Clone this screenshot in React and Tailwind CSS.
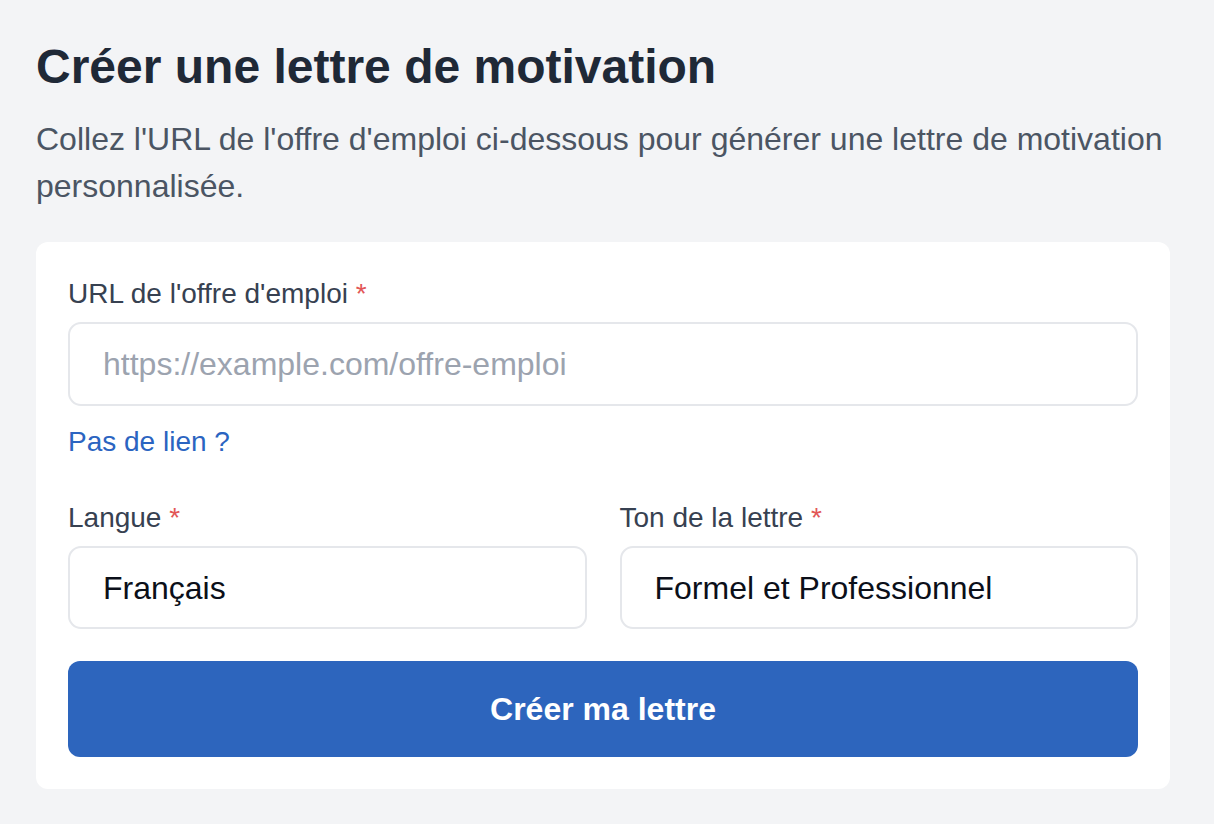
import React from "react";

export default function App() {
  return (
    <div
      className="min-h-[824px] w-full bg-[#f3f4f6] pl-[36px] pr-[44px] pt-[35px] pb-[32px]"
      style={{ fontFamily: '"Liberation Sans", Arial, Helvetica, sans-serif' }}
    >
      <h1 className="text-[48px] leading-[64px] font-bold text-[#1f2937]">
        Créer une lettre de motivation
      </h1>
      <p className="mt-[17px] text-[32px] leading-[47px] text-[#4b5563]">
        Collez l'URL de l'offre d'emploi ci-dessous pour générer une lettre de motivation personnalisée.
      </p>

      <div className="mt-[32px] rounded-[12px] bg-white p-[32px]">
        <label className="block text-[28px] leading-[40px] text-[#374151]">
          URL de l'offre d'emploi <span className="text-[#e25656]">*</span>
        </label>
        <div className="mt-[8px] flex h-[84px] items-center rounded-[13px] border-2 border-[#e5e7eb] bg-white px-[33px]">
          <span className="text-[32px] text-[#9ca3af]">https://example.com/offre-emploi</span>
        </div>
        <div className="mt-[16px] text-[28px] leading-[40px] text-[#2b64c1]">Pas de lien ?</div>

        <div className="mt-[36px] grid grid-cols-2 gap-[33px]">
          <div>
            <label className="block text-[28px] leading-[40px] text-[#374151]">
              Langue <span className="text-[#e25656]">*</span>
            </label>
            <div className="mt-[8px] flex h-[83px] items-center rounded-[13px] border-2 border-[#e5e7eb] bg-white px-[33px]">
              <span className="text-[32px] text-[#0b0f19]">Français</span>
            </div>
          </div>
          <div>
            <label className="block text-[28px] leading-[40px] text-[#374151]">
              Ton de la lettre <span className="text-[#e25656]">*</span>
            </label>
            <div className="mt-[8px] flex h-[83px] items-center rounded-[13px] border-2 border-[#e5e7eb] bg-white px-[33px]">
              <span className="text-[32px] text-[#0b0f19]">Formel et Professionnel</span>
            </div>
          </div>
        </div>

        <button className="mt-[32px] flex h-[96px] w-full items-center justify-center rounded-[12px] bg-[#2d65bd] text-[32px] font-bold text-white">
          Créer ma lettre
        </button>
      </div>
    </div>
  );
}
